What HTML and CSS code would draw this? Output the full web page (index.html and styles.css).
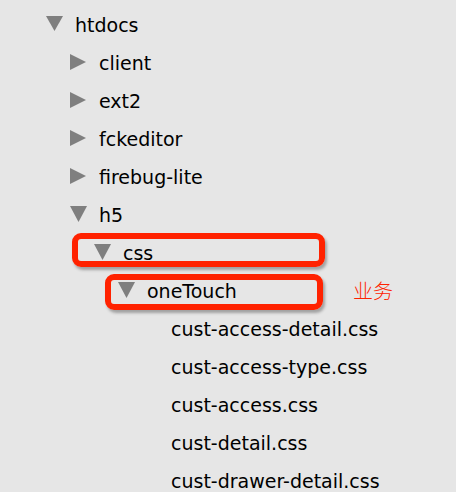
FILE: index.html
```html
<!DOCTYPE html>
<html>
<head>
<meta charset="utf-8">
<link rel="stylesheet" href="styles.css">
</head>
<body>
<div class="tree">
  <div class="row d0"><span class="tw"><svg class="down" width="18" height="18" viewBox="0 0 18 18"><polygon points="0,1 17,1 8.5,16"/></svg></span><span class="label">htdocs</span></div>
  <div class="row d1"><span class="tw"><svg width="18" height="18" viewBox="0 0 18 18"><polygon points="0,1 16,9 0,17"/></svg></span><span class="label">client</span></div>
  <div class="row d1"><span class="tw"><svg width="18" height="18" viewBox="0 0 18 18"><polygon points="0,1 16,9 0,17"/></svg></span><span class="label">ext2</span></div>
  <div class="row d1"><span class="tw"><svg width="18" height="18" viewBox="0 0 18 18"><polygon points="0,1 16,9 0,17"/></svg></span><span class="label">fckeditor</span></div>
  <div class="row d1"><span class="tw"><svg width="18" height="18" viewBox="0 0 18 18"><polygon points="0,1 16,9 0,17"/></svg></span><span class="label">firebug-lite</span></div>
  <div class="row d1"><span class="tw"><svg width="18" height="18" viewBox="0 0 18 18"><polygon points="0,1 17,1 8.5,17"/></svg></span><span class="label">h5</span></div>
  <div class="row d2 marked"><span class="tw"><svg width="18" height="18" viewBox="0 0 18 18"><polygon points="0,1 17,1 8.5,17"/></svg></span><span class="label">css</span><span class="box box-css"></span></div>
  <div class="row d3 marked"><span class="tw"><svg width="18" height="18" viewBox="0 0 18 18"><polygon points="0,1 17,1 8.5,17"/></svg></span><span class="label">oneTouch</span><span class="box box-one"></span><span class="note">业务</span></div>
  <div class="row d4 leaf"><span class="label">cust-access-detail.css</span></div>
  <div class="row d4 leaf"><span class="label">cust-access-type.css</span></div>
  <div class="row d4 leaf"><span class="label">cust-access.css</span></div>
  <div class="row d4 leaf"><span class="label">cust-detail.css</span></div>
  <div class="row d4 leaf"><span class="label">cust-drawer-detail.css</span></div>
</div>
</body>
</html>
```
FILE: styles.css
```css
html, body {
  margin: 0;
  padding: 0;
  background: #e6e6e6;
  overflow: hidden;
}
body {
  width: 456px;
  height: 492px;
  font-family: "DejaVu Sans", Verdana, sans-serif;
  font-size: 19px;
  color: #000;
}
.tree {
  padding-top: 5px;
}
.row {
  display: flex;
  align-items: center;
  height: 38px;
  white-space: nowrap;
}
.marked {
  position: relative;
}
.d0 { padding-left: 46px; }
.d1 { padding-left: 70px; }
.d2 { padding-left: 94px; }
.d3 { padding-left: 118px; }
.d4 { padding-left: 142px; }
.leaf { padding-left: 171px; }
.tw {
  width: 29px;
  height: 18px;
  flex: none;
  display: flex;
  align-items: center;
}
.tw svg {
  display: block;
  fill: #7f7f7f;
}
.label {
  padding-top: 2px;
  line-height: 22px;
}
.box {
  position: absolute;
  box-sizing: border-box;
  border: 6px solid #ff2200;
  border-radius: 9px;
  box-shadow: 2px 3px 3px rgba(0, 0, 0, 0.3);
}
.box-css {
  left: 72px;
  top: 0;
  width: 253px;
  height: 34px;
}
.box-one {
  left: 105px;
  top: 3px;
  width: 218px;
  height: 36px;
}
.note {
  position: absolute;
  left: 353px;
  top: 9px;
  font-family: "Noto Sans CJK SC", sans-serif;
  font-size: 20px;
  line-height: 22px;
  color: #ff2200;
  font-weight: 300;
}
```
